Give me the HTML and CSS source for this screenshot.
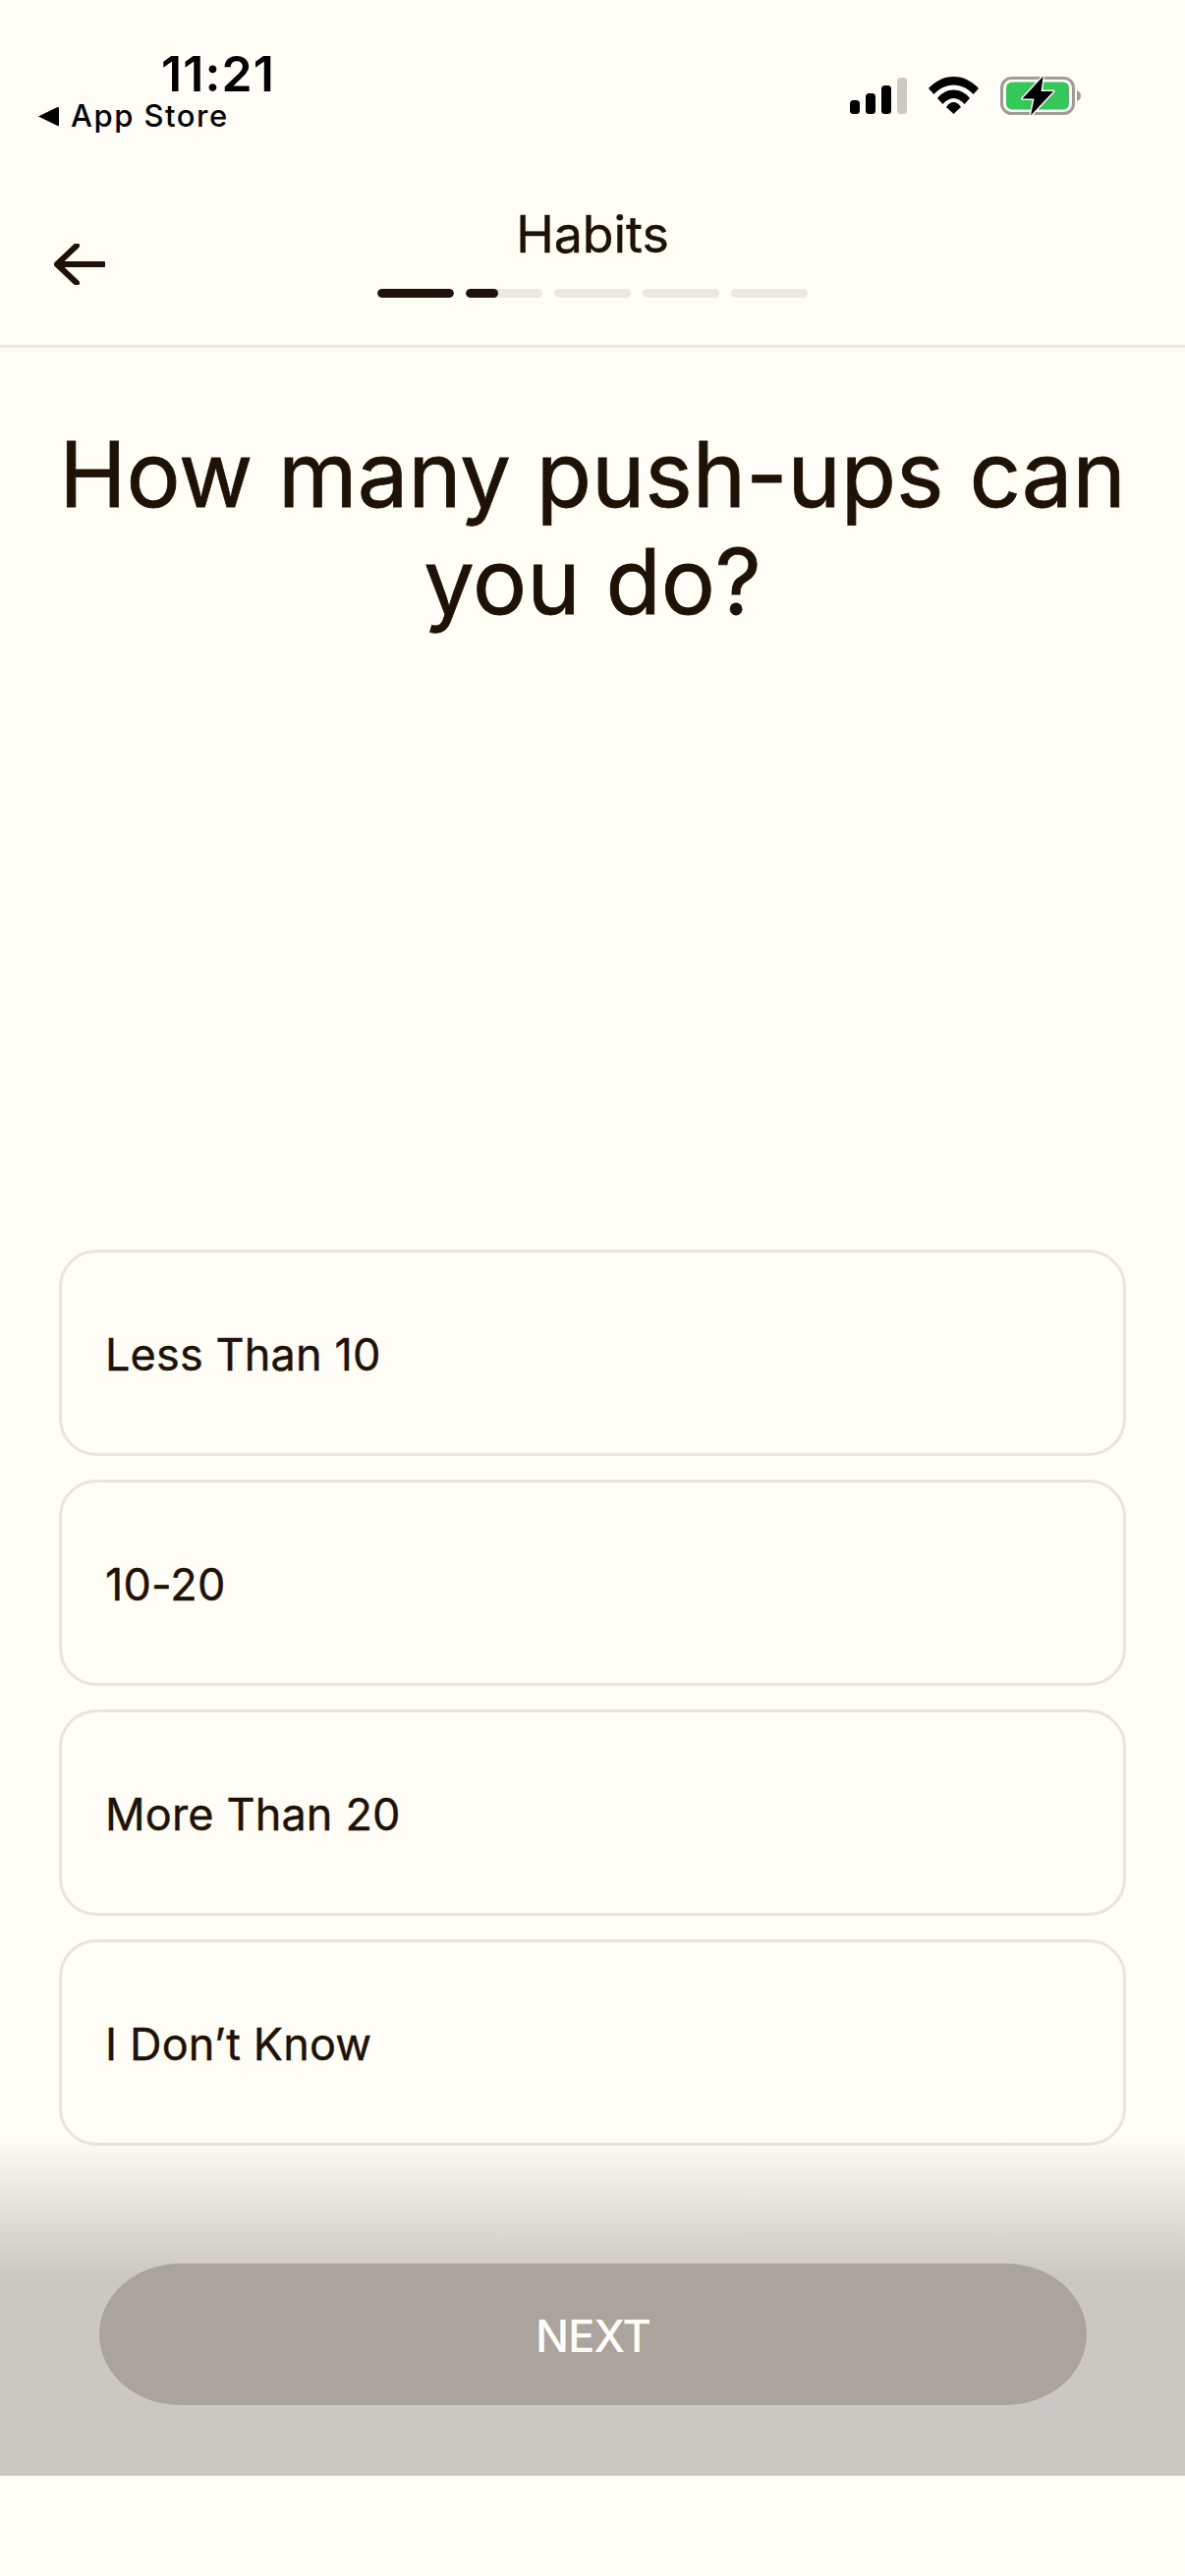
FILE: index.html
```html
<!DOCTYPE html>
<html lang="en">
<head>
<meta charset="utf-8">
<title>Habits</title>
<link rel="stylesheet" href="styles.css">
</head>
<body>
<div class="app">
  <header class="status">
    <div class="status-left">
      <div class="time">11:21</div>
      <div class="return">
        <svg class="return-icon" viewBox="0 0 22 21"><path d="M1 10.5 L20.5 1 Q22 0.5 22 2 V19 Q22 20.5 20.5 20 Z"/></svg>
        <span>App Store</span>
      </div>
    </div>
    <div class="status-right">
      <svg class="signal" viewBox="0 0 58 37">
        <rect x="0" y="23" width="10" height="14" rx="3.5"/>
        <rect x="16" y="16" width="10" height="21" rx="3.5"/>
        <rect x="32" y="8" width="10" height="29" rx="3.5"/>
        <rect class="signal-off" x="48" y="0" width="10" height="37" rx="3.5"/>
      </svg>
      <svg class="wifi" viewBox="0 0 51 38">
        <path d="M0 12 C7 4.5 15.5 0 25.5 0 C35.5 0 44 4.5 51 12 L45.5 18 C40 12 33 8.5 25.5 8.5 C18 8.5 11 12 5.5 18 Z"/>
        <path d="M9 22 C13.5 16.5 19 13.5 25.5 13.5 C32 13.5 37.5 16.5 42 22 L36.5 28 C33.5 24.5 29.5 22 25.5 22 C21.5 22 17.5 24.5 14.5 28 Z"/>
        <path d="M18 31 C20 27.5 23 26 25.5 26 C28 26 31 27.5 33 31 L25.5 38 Z"/>
      </svg>
      <svg class="battery" viewBox="0 0 82 41">
        <rect class="batt-shell" x="1.5" y="2.5" width="73" height="36" rx="10"/>
        <rect class="batt-fill" x="6" y="6.5" width="64" height="28" rx="6"/>
        <path class="batt-nub" d="M78 15 Q82 16.5 82 20.5 Q82 24.5 78 26 Z"/>
        <path class="batt-bolt" d="M43.7 0.5 L22.5 23.5 H34.5 L31 40.5 L54 16 H41.5 Z"/>
      </svg>
    </div>
  </header>

  <nav class="nav">
    <button class="back" aria-label="Back">
      <svg viewBox="0 0 52 42"><path d="M50 21 H3 M23 2 L3 21 L23 40" class="back-path"/></svg>
    </button>
    <div class="nav-center">
      <div class="nav-title">Habits</div>
      <div class="progress">
        <span class="seg"><i class="seg-fill seg-full"></i></span>
        <span class="seg"><i class="seg-fill seg-part"></i></span>
        <span class="seg"></span>
        <span class="seg"></span>
        <span class="seg"></span>
      </div>
    </div>
  </nav>

  <main class="main">
    <h1 class="question">How many push-ups can you do?</h1>
    <div class="options">
      <div class="option">Less Than 10</div>
      <div class="option">10-20</div>
      <div class="option">More Than 20</div>
      <div class="option">I Don’t Know</div>
    </div>
  </main>

  <footer class="footer">
    <button class="next">NEXT</button>
  </footer>
</div>
</body>
</html>
```

FILE: styles.css
```css
* { box-sizing: border-box; }
html, body { margin: 0; padding: 0; background: #fffdf6; }
body { font-family: Inter, "Liberation Sans", sans-serif; color: #1e1206; }

.app {
  position: relative;
  width: 1206px;
  height: 2622px;
  display: flex;
  flex-direction: column;
  overflow: hidden;
}

/* status bar */
.status {
  height: 190px;
  flex: none;
  display: flex;
  justify-content: space-between;
  align-items: flex-start;
  padding-right: 106px;
}
.status-left { padding: 48px 0 0 38px; color: #000; }
.time {
  margin-left: 126px;
  font-size: 50px;
  line-height: 54px;
  font-weight: 600;
  letter-spacing: 1.1px;
}
.return {
  display: flex;
  align-items: center;
  gap: 12px;
  font-size: 31px;
  line-height: 32px;
  font-weight: 500;
  letter-spacing: 1.5px;
}
.return-icon { width: 22px; height: 21px; fill: #000; }
.status-right { display: flex; align-items: flex-start; padding-top: 77px; }
.signal { width: 58px; height: 37px; margin-top: 2px; fill: #000; }
.signal-off { fill: #ccc9c4; }
.wifi { width: 51px; height: 38px; margin: 1px 0 0 22px; fill: #000; }
.battery { width: 82px; height: 41px; margin-left: 22px; }
.batt-shell { fill: none; stroke: #9d9c98; stroke-width: 3; }
.batt-fill { fill: #34c759; }
.batt-nub { fill: #9d9c98; }
.batt-bolt { fill: #000; stroke: #fffdf6; stroke-width: 3; paint-order: stroke; stroke-linejoin: round; }

/* nav */
.nav {
  flex: none;
  display: grid;
  grid-template-columns: 1fr auto 1fr;
  height: 164px;
  padding-top: 19px;
  border-bottom: 3px solid #ebe8e3;
}
.back {
  justify-self: start;
  margin: 39px 0 0 55px;
  padding: 0;
  width: 52px;
  height: 42px;
  border: 0;
  background: none;
}
.back svg { display: block; width: 52px; height: 42px; }
.back-path {
  fill: none;
  stroke: #1e1206;
  stroke-width: 6;
  stroke-linecap: round;
  stroke-linejoin: round;
}
.nav-center { display: flex; flex-direction: column; align-items: center; }
.nav-title { font-size: 52px; line-height: 60px; letter-spacing: -0.1px; -webkit-text-stroke: 0.4px #1e1206; }
.progress { display: flex; gap: 12px; margin-top: 25px; }
.seg {
  display: block;
  width: 78px;
  height: 9px;
  border-radius: 5px;
  background: #ebe8e3;
  overflow: hidden;
}
.seg-fill { display: block; height: 100%; border-radius: 5px; background: #1e120b; }
.seg-full { width: 100%; }
.seg-part { width: 33px; }

/* content */
.main {
  flex: 1;
  min-height: 0;
  display: flex;
  flex-direction: column;
  justify-content: space-between;
  padding: 74px 60px 438px;
}
.question {
  margin: 0;
  font-size: 92px;
  line-height: 109px;
  font-weight: 400;
  letter-spacing: -0.05px;
  text-align: center;
  -webkit-text-stroke: 0.8px #1e1206;
}
.options { display: flex; flex-direction: column; gap: 24px; }
.option {
  height: 210px;
  display: flex;
  align-items: center;
  padding: 2px 0 0 44px;
  border: 3px solid #e8e6dc;
  border-radius: 38px;
  font-size: 45px;
  letter-spacing: 0.15px;
  -webkit-text-stroke: 0.4px #1e1206;
}

/* footer */
.footer {
  position: absolute;
  left: 0;
  right: 0;
  top: 2173px;
  height: 347px;
  padding: 131px 100px 72px 101px;
  background: linear-gradient(to bottom, rgba(203, 200, 195, 0) 0, #cbc8c3 144px, #cbc8c3 100%);
}
.next {
  display: block;
  width: 100%;
  height: 144px;
  padding: 3px 0 0;
  border: 0;
  border-radius: 82px / 72px;
  background: #aba39d;
  color: #fffdf6;
  font-family: Inter, "Liberation Sans", sans-serif;
  font-size: 45px;
  font-weight: 500;
  letter-spacing: -0.8px;
}
```
